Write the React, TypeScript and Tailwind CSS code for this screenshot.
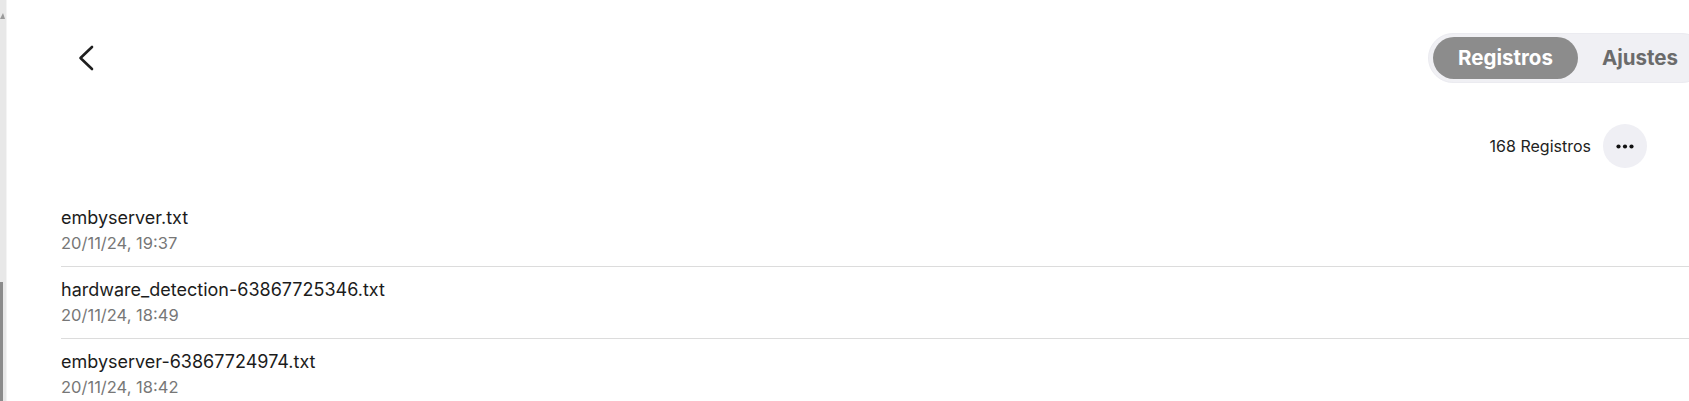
import React from 'react';

const logs = [
  { name: 'embyserver.txt', date: '20/11/24, 19:37' },
  { name: 'hardware_detection-63867725346.txt', date: '20/11/24, 18:49' },
  { name: 'embyserver-63867724974.txt', date: '20/11/24, 18:42' },
];

const Scrollbar = () => (
  <div className="w-[7px] h-full shrink-0 flex flex-col bg-[#e8e8e8] border-r border-[#f4f4f4]">
    <svg width="5" height="10" viewBox="0 0 5 10" className="mt-[11px]">
      <polygon points="0,8 3,2 5,8" fill="#9a9a9a" />
    </svg>
    <div className="h-[261px]" />
    <div className="flex-1 w-[3px] bg-[#8b8b8b]" />
  </div>
);

export default function App() {
  return (
    <div
      className="w-full h-[401px] flex bg-white overflow-hidden"
      style={{ fontFamily: 'Inter, "Noto Sans", sans-serif' }}
    >
      <Scrollbar />
      <div className="flex-1 min-w-0 flex flex-col">
        {/* Header */}
        <div className="flex items-center h-[50px] mt-[33px]">
          <button className="ml-[71px] text-[#1f1f1f]">
            <svg width="16" height="26" viewBox="0 0 16 26" fill="none">
              <path d="M14 2 L2.5 13 L14 24" stroke="currentColor" strokeWidth="2.6" strokeLinecap="round" strokeLinejoin="round" />
            </svg>
          </button>
          <div className="flex-1" />
          <div className="shrink-0 mr-[-18px] flex items-center p-[4px] h-[50px] rounded-full bg-[#f0f0f4] border border-[#ebebf0]">
            <div className="h-[42px] px-[25px] flex items-center rounded-full bg-[#8c8c8c] text-white text-[20.5px] font-bold">
              Registros
            </div>
            <div className="h-[42px] px-[24px] flex items-center rounded-full text-[#6b6b6b] text-[20.5px] font-bold">
              Ajustes
            </div>
          </div>
        </div>

        {/* Count + menu */}
        <div className="flex items-center justify-end gap-3 mt-[41px] pr-[42px]">
          <span className="text-[16px] text-[#222]">168 Registros</span>
          <button className="w-[44px] h-[44px] rounded-full bg-[#efeff4] flex items-center justify-center">
            <svg width="18" height="5" viewBox="0 0 18 5">
              <circle cx="2.5" cy="2.5" r="2.1" fill="#111" />
              <circle cx="9" cy="2.5" r="2.1" fill="#111" />
              <circle cx="15.5" cy="2.5" r="2.1" fill="#111" />
            </svg>
          </button>
        </div>

        {/* Log list */}
        <div className="mt-[27px] pl-[54px]">
          {logs.map((log) => (
            <div key={log.name} className="py-[10px] border-b border-[#dcdcdc]">
              <div className="text-[18px] leading-[26px] text-[#1c1c1c]">{log.name}</div>
              <div className="text-[16.5px] leading-[25px] text-[#777]">{log.date}</div>
            </div>
          ))}
        </div>
      </div>
    </div>
  );
}
